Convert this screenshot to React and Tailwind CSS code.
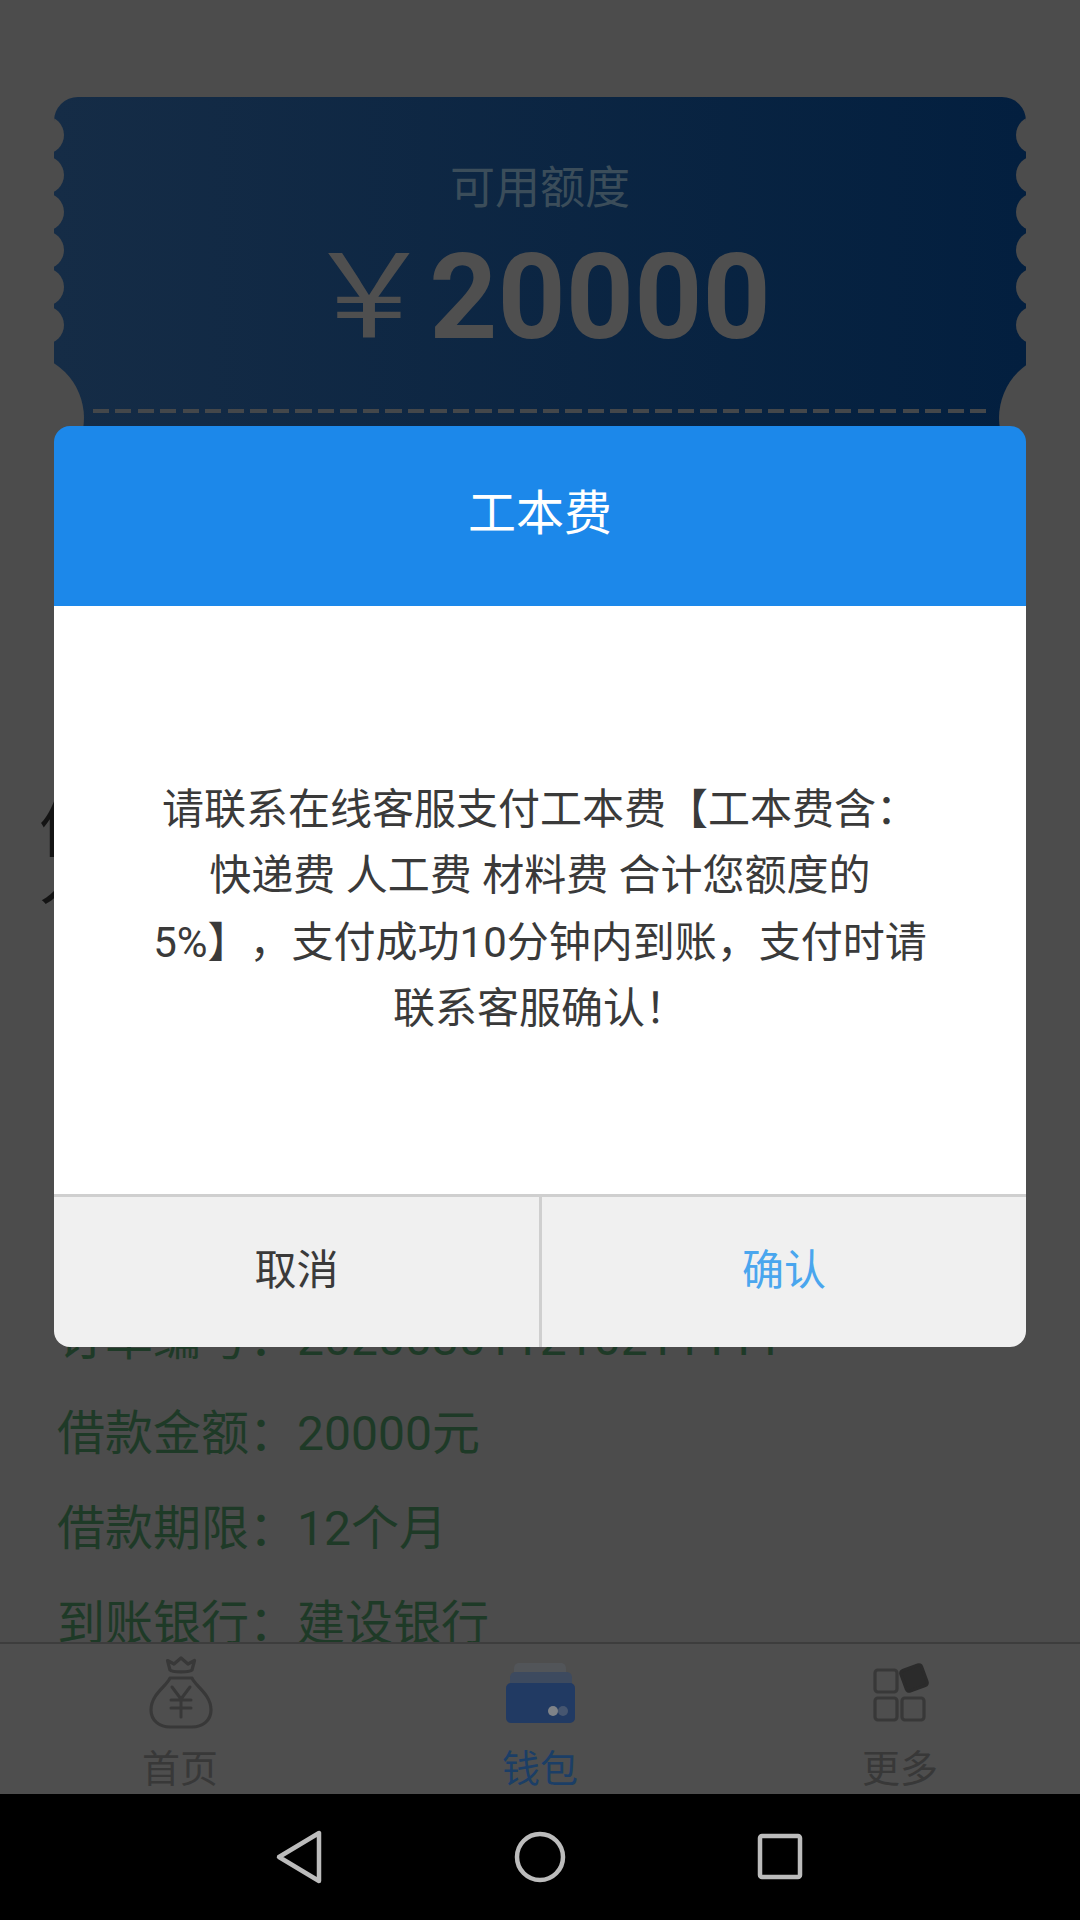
const FONT = "font-['Roboto','Noto_Sans_CJK_SC',sans-serif]";

function Scallops({ side }) {
  const ys = [135, 175, 212, 250, 287, 325];
  return (
    <>
      {ys.map((y) => (
        <div
          key={y}
          className={
            "absolute w-[38px] h-[38px] rounded-full bg-[#4c4c4c] " +
            (side === "left" ? "left-[-28px]" : "right-[-28px]")
          }
          style={{ top: y - 97 - 19 }}
        />
      ))}
      <div
        className={
          "absolute w-[130px] h-[130px] rounded-full bg-[#4c4c4c] top-[256px] " +
          (side === "left" ? "left-[-100px]" : "right-[-103px]")
        }
      />
    </>
  );
}

function BagIcon() {
  return (
    <svg width="76" height="76" viewBox="0 0 76 76" fill="none" stroke="#383838" strokeWidth="3.2" strokeLinecap="round" strokeLinejoin="round">
      <g transform="translate(2 1)">
        <path d="M26 16 L23.5 6.5 L30 10 L37 4 L44 10 L50.5 6.5 L48 16 C46 18.5 28 18.5 26 16 Z" />
        <path d="M26 24 H48 C51 32 67 40 67 56 C67 67 58 73 48 73 H26 C16 73 7 67 7 56 C7 40 23 32 26 24 Z" />
        <path d="M28 33 L37 45 L46 33 M37 45 V63 M27 46 H47 M27 54 H47" strokeWidth="3" />
      </g>
    </svg>
  );
}

function WalletIcon() {
  return (
    <svg width="76" height="76" viewBox="0 0 76 76" fill="none">
      <path d="M12 16 C12 12 14 10 17 10 H59 C62 10 64 12 64 16 V26 H12 Z" fill="#525559" />
      <path d="M8 25 C8 21 10 19 14 19 H64 C68 19 70 21 70 25 V36 H8 Z" fill="#3d4a5f" />
      <rect x="4" y="30" width="69" height="40" rx="5" fill="#213a63" />
      <circle cx="61" cy="58" r="5" fill="#465670" />
      <circle cx="51" cy="58" r="5" fill="#7f8388" />
    </svg>
  );
}

function MoreIcon() {
  return (
    <svg width="76" height="76" viewBox="0 0 76 76" fill="none" stroke="#383838" strokeWidth="3.2">
      <rect x="13" y="17" width="22" height="22" rx="3" />
      <rect x="13" y="45" width="22" height="22" rx="3" />
      <rect x="40" y="45" width="22" height="22" rx="3" />
      <rect x="41" y="14" width="22" height="22" rx="3" fill="#2b2b2b" stroke="#2b2b2b" transform="rotate(-20 52 25)" />
    </svg>
  );
}

function Tab({ label, active, children }) {
  return (
    <div className="flex-1 flex flex-col items-center pt-[9px]">
      <div className="w-[76px] h-[76px] flex items-center justify-center">{children}</div>
      <div className={"text-[38px] leading-[50px] mt-[15px] " + (active ? "text-[#1b3e66]" : "text-[#383838]")}>{label}</div>
    </div>
  );
}

export default function App() {
  return (
    <div className={"relative w-[1080px] h-[1920px] overflow-hidden flex flex-col bg-[#4c4c4c] [text-spacing-trim:space-all] " + FONT}>
      <div className="flex-1 min-h-0 overflow-hidden pt-[97px] flex flex-col">
        <div className="relative mx-[54px] h-[470px] shrink-0 rounded-t-[24px] overflow-hidden bg-linear-to-r from-[#152c46] to-[#031f3f] flex flex-col items-center">
          <Scallops side="left" />
          <Scallops side="right" />
          <div className="mt-[63px] text-[45px] leading-[58px] text-[#3b4d5a]">可用额度</div>
          <div className="mt-[25px] h-[110px] flex items-center text-[#4f4f4f] pl-[2px]">
            <span className="text-[116px] leading-[110px] mr-[2px] pb-[24px] scale-x-[1.12] font-['Noto_Sans_CJK_SC',sans-serif]">￥</span>
            <span className="text-[119px] leading-[110px] font-bold">20000</span>
          </div>
          <div className="absolute left-[39px] right-[39px] top-[312px] h-[4px] bg-[repeating-linear-gradient(90deg,#44474a_0,#44474a_16px,transparent_16px,transparent_22.5px)]" />
        </div>

        <div className="mt-[220px] pl-[39px] text-[64px] leading-[85px] text-[#141414]">
          <div>信用</div>
          <div className="-mt-[37px]">人</div>
        </div>

        <div className="mt-[371px] pl-[57px] flex flex-col text-[48px] leading-[95px] text-[#1e3a27] shrink-0">
          <div>订单编号：202003011210211111</div>
          <div>借款金额：20000元</div>
          <div>借款期限：12个月</div>
          <div>到账银行：建设银行</div>
        </div>
      </div>

      <div className="h-[152px] shrink-0 border-t-2 border-[#3d3d3d] bg-[#4e4e4e] flex overflow-hidden">
        <Tab label="首页"><BagIcon /></Tab>
        <Tab label="钱包" active><WalletIcon /></Tab>
        <Tab label="更多"><MoreIcon /></Tab>
      </div>

      <div className="h-[126px] shrink-0 bg-black flex items-center justify-center gap-[180px]">
        <svg width="60" height="60" viewBox="0 0 60 60" fill="none" stroke="#bcbcbc" strokeWidth="4.5" strokeLinejoin="round">
          <path d="M9 30 L49 6 V54 Z" />
        </svg>
        <svg width="60" height="60" viewBox="0 0 60 60" fill="none" stroke="#bcbcbc" strokeWidth="4.5">
          <circle cx="30" cy="30" r="23" />
        </svg>
        <svg width="60" height="60" viewBox="0 0 60 60" fill="none" stroke="#bcbcbc" strokeWidth="4.5" strokeLinejoin="round">
          <rect x="10" y="9" width="40" height="41" rx="2" />
        </svg>
      </div>

      <div className="absolute left-[54px] top-[426px] w-[972px] h-[921px] rounded-[16px] overflow-hidden flex flex-col">
        <div className="h-[180px] shrink-0 bg-[#1c88ea] flex items-center justify-center text-white text-[48px] pb-[4px]">工本费</div>
        <div className="flex-1 bg-white flex items-center justify-center text-center text-[42px] leading-[66.3px] text-[#3a3a3a] pt-[19px]">
          <p>
            请联系在线客服支付工本费【工本费含：<br />
            快递费 人工费 材料费 合计您额度的<br />
            5%】，支付成功10分钟内到账，支付时请<br />
            联系客服确认！
          </p>
        </div>
        <div className="h-[153px] shrink-0 flex bg-[#f0f0f0] border-t-[3px] border-[#cfcfcf] text-[42px]">
          <div className="w-[488px] border-r-[3px] border-[#cfcfcf] flex items-center justify-center text-[#3a3a3a] pb-[4px]">取消</div>
          <div className="flex-1 flex items-center justify-center text-[#4aa6ee] pb-[4px]">确认</div>
        </div>
      </div>
    </div>
  );
}
